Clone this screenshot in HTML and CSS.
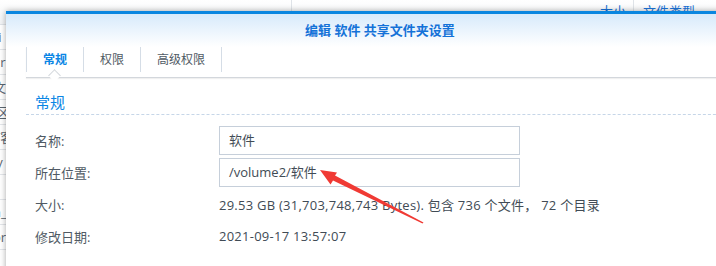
FILE: index.html
```html
<!DOCTYPE html>
<html lang="zh-CN">
<head>
<meta charset="utf-8">
<title>编辑 软件 共享文件夹设置</title>
<link rel="stylesheet" href="styles.css">
</head>
<body>
<div class="desk">
  <div class="list-head">
    <span class="col col-name"></span>
    <span class="col col-size">大小</span>
    <span class="col col-type">文件类型</span>
  </div>
  <div class="list-row"><span class="frag">ri</span></div>
  <div class="list-row"><span class="frag">ar</span></div>
  <div class="list-row"><span class="frag">文&gt;</span></div>
  <div class="list-row"><span class="frag">i区</span></div>
  <div class="list-row"><span class="frag">T客</span></div>
  <div class="list-row"><span class="frag">iy</span></div>
  <div class="list-row"><span class="frag">ll</span></div>
  <div class="list-row"><span class="frag">n_</span></div>
  <div class="list-row"><span class="frag">or</span></div>
</div>

<div class="dialog">
  <div class="dlg-head">编辑 软件 共享文件夹设置</div>
  <div class="tabs">
    <div class="tab active">常规</div>
    <div class="tab">权限</div>
    <div class="tab">高级权限</div>
  </div>
  <div class="body">
    <div class="section-title">常规</div>
    <div class="form">
      <div class="row">
        <div class="label">名称:</div>
        <div class="field"><div class="input">软件</div></div>
      </div>
      <div class="row">
        <div class="label">所在位置:</div>
        <div class="field"><div class="input">/volume2/软件</div></div>
      </div>
      <div class="row text-row">
        <div class="label">大小:</div>
        <div class="value">29.53 GB (31,703,748,743 Bytes). 包含 736 个文件， 72 个目录</div>
      </div>
      <div class="row text-row">
        <div class="label">修改日期:</div>
        <div class="value">2021-09-17 13:57:07</div>
      </div>
    </div>
  </div>
</div>

<svg class="arrow" width="716" height="266" viewBox="0 0 716 266">
  <polygon points="320,170 337,172.5 335,175.5 423.5,222.5 422.5,223.5 333,180.5 330.5,184.5" fill="#f03a34"/>
</svg>
</body>
</html>
```

FILE: styles.css
```css
* { box-sizing: border-box; }
html, body { margin: 0; padding: 0; }
body {
  width: 716px;
  height: 266px;
  overflow: hidden;
  position: relative;
  background: #ffffff;
  font-family: "Open Sans", "Noto Sans CJK SC", sans-serif;
  font-size: 13px;
  color: #414b55;
}

/* background file list */
.desk {
  width: 716px;
  height: 266px;
  overflow: hidden;
  background: #fff;
}
.list-head {
  display: flex;
  height: 25px;
  background: linear-gradient(#ffffff, #f2f4f6);
  border-bottom: 1px solid #dfe3e8;
  color: #1a73d9;
  font-size: 13px;
  line-height: 23px;
}
.col { padding-left: 8px; }
.col-name { width: 292px; border-right: 1px solid #dfe3e8; }
.col-size { width: 342px; text-align: right; padding-right: 7px; border-right: 1px solid #dfe3e8; }
.col-type { padding-left: 9px; }
.list-row {
  height: 25px;
  border-bottom: 1px solid #e3e6ea;
  color: #5b6670;
  line-height: 24px;
  font-size: 13px;
  overflow: hidden;
}
.frag { margin-left: -7px; }

/* dialog window */
.dialog {
  position: absolute;
  left: 6px;
  top: 11px;
  width: 740px;
  height: 280px;
  background: #fff;
  border-top: 3px solid #0a86e0;
  box-shadow: 0 0 6px rgba(0, 0, 0, 0.35);
}
.dlg-head {
  height: 33px;
  background: linear-gradient(#d7eafb, #ffffff);
  color: #1472d8;
  font-weight: bold;
  font-size: 13px;
  line-height: 32px;
  padding-left: 299px;
}
.tabs {
  display: flex;
  margin-left: 20px;
  height: 31px;
  border-bottom: 1px solid #d3d7dc;
  box-shadow: 0 1px 1px rgba(0, 0, 0, 0.06);
  position: relative;
}
.tab {
  position: relative;
  padding: 0 16px;
  height: 25px;
  line-height: 25px;
  border-left: 1px solid #d5dde6;
  color: #505a64;
  font-size: 12px;
}
.tab:last-child { border-right: 1px solid #d5dde6; }
.tab.active { color: #0a86e5; font-weight: bold; }
.tab.active::after {
  content: "";
  position: absolute;
  left: 23px;
  bottom: -8px;
  width: 8px;
  height: 8px;
  background: #fff;
  border-left: 1px solid #d3d7dc;
  border-top: 1px solid #d3d7dc;
  transform: rotate(45deg);
}
.body {
  padding-left: 20px;
}
.section-title {
  margin-top: 13px;
  height: 24px;
  line-height: 22px;
  padding-left: 9px;
  color: #0a86e5;
  font-size: 15px;
  border-bottom: 1px dashed #c6d6e8;
}
.form {
  padding-top: 9px;
  padding-left: 9px;
}
.row {
  display: flex;
  align-items: center;
  height: 32px;
}
.label {
  width: 184px;
  color: #505a64;
}
.input {
  width: 301px;
  height: 29px;
  border: 1px solid #c6cfda;
  padding-left: 9px;
  line-height: 27px;
  color: #414b55;
}
.value {
  color: #414b55;
  letter-spacing: 0.25px;
}
.arrow {
  position: absolute;
  left: 0;
  top: 0;
}
```
